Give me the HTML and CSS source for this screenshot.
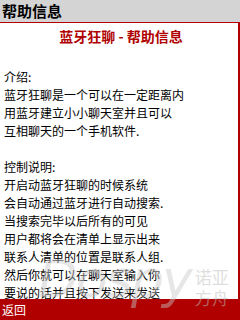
FILE: index.html
```html
<!DOCTYPE html>
<html lang="zh">
<head>
<meta charset="utf-8">
<link rel="stylesheet" href="styles.css">
</head>
<body>
<div class="screen">
  <div class="header">帮助信息</div>
  <div class="content">
    <div class="title">蓝牙狂聊 - 帮助信息</div>
    <div class="section">
      <div class="line">介绍:</div>
      <div class="line">蓝牙狂聊是一个可以在一定距离内</div>
      <div class="line">用蓝牙建立小小聊天室并且可以</div>
      <div class="line">互相聊天的一个手机软件.</div>
    </div>
    <div class="section">
      <div class="line">控制说明:</div>
      <div class="line">开启动蓝牙狂聊的时候系统</div>
      <div class="line">会自动通过蓝牙进行自动搜索.</div>
      <div class="line">当搜索完毕以后所有的可见</div>
      <div class="line">用户都将会在清单上显示出来</div>
      <div class="line">联系人清单的位置是联系人组.</div>
      <div class="line">然后你就可以在聊天室输入你</div>
      <div class="line">要说的话并且按下发送来发送</div>
    </div>
  </div>
  <div class="footer">返回</div>
  <div class="watermark">
    <span class="wm-latin">Dospy</span>
    <span class="wm-cjk">诺亚<br>方舟</span>
  </div>
</div>
</body>
</html>
```

FILE: styles.css
```css
html, body {
  margin: 0;
  padding: 0;
}
body {
  width: 240px;
  height: 320px;
  overflow: hidden;
  font-family: "Noto Sans CJK SC", "Noto Sans", sans-serif;
}
.screen {
  position: relative;
  width: 240px;
  height: 320px;
  display: flex;
  flex-direction: column;
  background: #ffffff;
}
.header {
  height: 22px;
  line-height: 22px;
  background: #d4d4d4;
  border-bottom: 1px solid #b40000;
  color: #000;
  font-size: 15px;
  font-weight: bold;
  padding-left: 2px;
  flex: none;
}
.content {
  flex: 1;
  min-height: 0;
  overflow: hidden;
  border-right: 2px solid #b00000;
  padding: 4px 0 0 4px;
  color: #000;
  font-size: 12px;
  line-height: 18px;
}
.title {
  color: #b00000;
  font-size: 14px;
  font-weight: bold;
  line-height: 18px;
  text-align: center;
  margin-bottom: 23px;
}
.section {
  margin-bottom: 18px;
}
.line {
  white-space: nowrap;
}
.footer {
  height: 21px;
  line-height: 21px;
  background: #b00000;
  color: #fff;
  font-size: 12px;
  padding-left: 2px;
  flex: none;
}
.watermark {
  position: absolute;
  left: 38px;
  top: 248px;
  display: flex;
  align-items: flex-start;
  gap: 4px;
  pointer-events: none;
}
.wm-latin {
  font-family: "DejaVu Sans", sans-serif;
  font-style: italic;
  font-size: 52px;
  line-height: 62px;
  color: rgba(200, 200, 200, 0.45);
  letter-spacing: -2px;
}
.wm-cjk {
  font-size: 17px;
  line-height: 21px;
  margin-top: 18px;
  color: rgba(190, 190, 190, 0.5);
}
```
